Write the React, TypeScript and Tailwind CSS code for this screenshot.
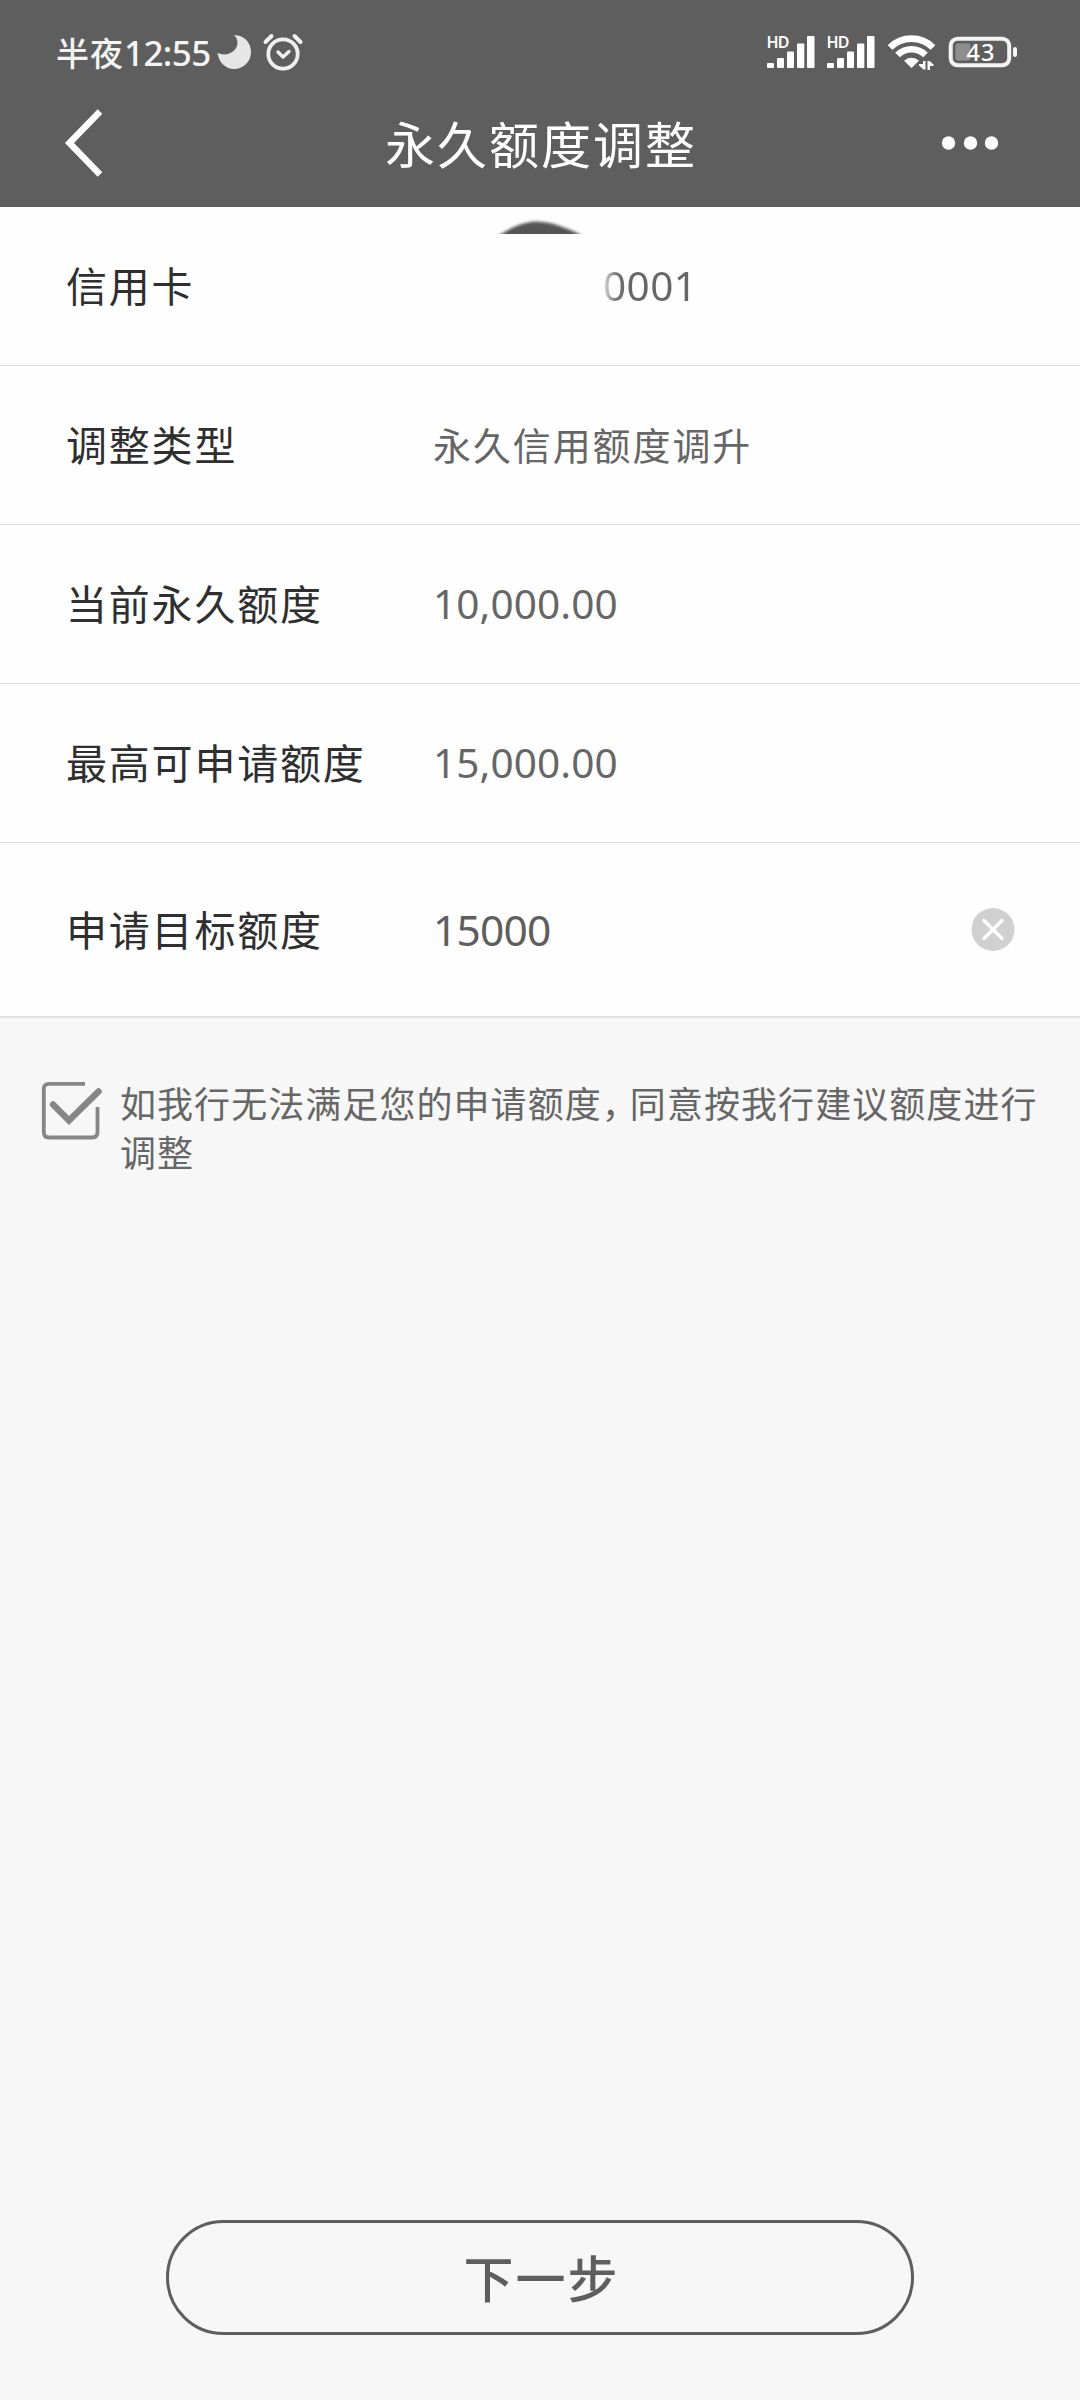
import React from "react";

const CJK = "font-['Noto_Sans_CJK_SC',sans-serif]";
const NUM = "font-['Noto_Sans','Noto_Sans_CJK_SC',sans-serif]";

function Signal() {
  return (
    <svg width="50" height="36" viewBox="0 0 50 36" fill="#fff" className="overflow-visible">
      <text x="0.5" y="14" fontFamily="Noto Sans" fontSize="16" fontWeight="600" textLength="23">HD</text>
      <rect x="1" y="29" width="7" height="5" rx="1" />
      <rect x="11" y="24" width="7" height="10" rx="1" />
      <rect x="21" y="17.5" width="7" height="16.5" rx="1" />
      <rect x="31" y="9.5" width="7.3" height="24.5" rx="1" />
      <rect x="41" y="2" width="7.5" height="32" rx="1" />
    </svg>
  );
}

function Wifi() {
  return (
    <svg width="50" height="36" viewBox="0 0 50 36">
      <g fill="none" stroke="#fff" strokeWidth="6.6">
        <path d="M3 13.5 A30.5 30.5 0 0 1 46 13.5" />
        <path d="M10.5 21 A20 20 0 0 1 38.5 21" />
      </g>
      <path d="M17 26.8 A11 11 0 0 1 32 26.8 L24.5 34 Z" fill="#fff" />
      <g fill="#fff">
        <path d="M36 27 H38.500 V35.500 H36.500 L32 31.500 V30 H36 Z" />
        <path d="M43 36 H40.500 V27 H42.500 L46.500 30.500 V32 H43 Z" />
      </g>
    </svg>
  );
}

function Battery() {
  return (
    <svg width="70" height="32" viewBox="0 0 70 32">
      <rect x="2.7" y="2.700" width="58.5" height="26.6" rx="7" fill="none" stroke="#f4f4f4" strokeWidth="4" />
      <rect x="7.5" y="7.500" width="15" height="17" rx="2" fill="#8e8e8e" />
      <text x="18.5" y="24.500" fontFamily="Noto Sans" fontSize="23.5" fontWeight="500" fill="#fff" textLength="28">43</text>
      <rect x="65" y="11" width="4" height="10" rx="2" fill="#f4f4f4" />
    </svg>
  );
}

function Row({ label, children }: { label: string; children: React.ReactNode }) {
  return (
    <div className="relative flex h-[159px] items-center border-b-[1px] border-[#d9d9d9] pl-[66px]">
      <div className={`w-[367px] pb-[3px] text-[41px] leading-none tracking-[1.8px] text-[#2f2f2f] ${CJK}`}>{label}</div>
      {children}
    </div>
  );
}

const amount = `text-[40.5px] leading-none tracking-[0.1px] text-[#666] ${NUM}`;

export default function App() {
  return (
    <div className="flex h-[2400px] w-[1080px] flex-col overflow-hidden bg-[#f7f7f7]">
      <header className="h-[207px] shrink-0 bg-[#5e5e5e] text-white">
        <div className="flex h-[90px] items-center pt-[14px] pl-[56px]">
          <span className={`text-[33px] font-medium leading-none tracking-[1px] text-[#f4f4f4] ${CJK}`}>半夜</span>
          <span className={`text-[35px] font-medium leading-none tracking-[-0.6px] text-[#f4f4f4] ${NUM}`}>12:55</span>
          <svg className="ml-[5px]" width="38" height="36" viewBox="0 0 38 36">
            <path d="M18 1 C29 1 35 9.500 35 18 C35 28 27 35 18 35 C10 35 3 29 1.500 19 C11 23 21 18 21.500 9 C21.500 6 20.500 3 18 1 Z" fill="#e6e6e6" />
          </svg>
          <svg className="ml-[8px]" width="42" height="40" viewBox="0 0 42 40" fill="none" stroke="#f0f0f0" strokeLinecap="round">
            <circle cx="21" cy="22" r="14.700" strokeWidth="3.800" />
            <path d="M16 20 L21 25 L27 19.500" strokeWidth="3.400" strokeLinejoin="round" />
            <path d="M3.500 10 L9.500 4 M32.500 4 L38.500 10" strokeWidth="4" />
          </svg>
          <div className="mr-[62px] ml-auto flex items-center">
            <Signal />
            <span className="w-[10px]" />
            <Signal />
            <span className="w-[11px]" />
            <Wifi />
            <span className="w-[11px]" />
            <Battery />
          </div>
        </div>
        <div className="flex h-[106px] items-center">
          <svg className="ml-[62px]" width="42" height="72" viewBox="0 0 42 72" fill="none" stroke="#fff" strokeWidth="6.5">
            <path d="M38 4.500 L7.500 36 L38 67.500" />
          </svg>
          <h1 className={`ml-[281px] pb-[2px] text-[50px] leading-none font-normal tracking-[2px] whitespace-nowrap ${CJK}`}>永久额度调整</h1>
          <svg className="mr-[80px] ml-auto" width="60" height="20" viewBox="0 0 60 20" fill="#fff">
            <circle cx="8.500" cy="10" r="6.700" />
            <circle cx="30.500" cy="10" r="6.700" />
            <circle cx="51.500" cy="10" r="6.700" />
          </svg>
        </div>
      </header>

      <main className="flex-1">
        <section className="bg-[#fefefe]">
          <Row label="信用卡">
            <svg className="absolute top-[8px] left-[490px]" width="100" height="19" viewBox="0 0 100 19">
              <defs>
                <filter id="soft" x="-20%" y="-50%" width="140%" height="200%">
                  <feGaussianBlur stdDeviation="1.800" />
                </filter>
              </defs>
              <path d="M-10 31 L10 19.500 C23 12 34 6.500 47 6.500 C62 7 77 13 90 19.500 L112 31 Z" fill="#555" filter="url(#soft)" />
            </svg>
            <span className={`ml-[170px] bg-gradient-to-r from-[#ddd] from-0% via-[#777] via-[14%] to-[#666] to-[25%] bg-clip-text text-[40.5px] leading-none tracking-[0.4px] text-transparent ${NUM}`}>0001</span>
          </Row>
          <Row label="调整类型">
            <span className={`pb-[2px] text-[38px] leading-none tracking-[1.900px] text-[#666] ${CJK}`}>永久信用额度调升</span>
          </Row>
          <Row label="当前永久额度">
            <span className={amount}>10,000.00</span>
          </Row>
          <Row label="最高可申请额度">
            <span className={amount}>15,000.00</span>
          </Row>
          <div className="flex h-[175px] items-center border-b-2 border-[#e0e0e0] pl-[66px]">
            <div className={`w-[367px] pb-[2px] text-[41px] leading-none tracking-[1.8px] text-[#2f2f2f] ${CJK}`}>申请目标额度</div>
            <span className={`pt-[1px] text-[42.5px] leading-none tracking-[-0.8px] text-[#5e5e5e] ${NUM}`}>15000</span>
            <svg className="mr-[65px] ml-auto" width="44" height="44" viewBox="0 0 44 44">
              <circle cx="22" cy="21.500" r="21.500" fill="#d0d0d0" />
              <path d="M13 12.500 L31 30.500 M31 12.500 L13 30.500" stroke="#fff" strokeWidth="3.400" strokeLinecap="round" />
            </svg>
          </div>
        </section>

        <label className="flex pt-[60px] pl-[40px]">
          <svg className="mt-[2px] shrink-0" width="64" height="62" viewBox="0 0 64 62" fill="none" stroke="#868686">
            <path d="M45 3.800 H9 Q3.800 3.800 3.800 9 V52 Q3.800 57.500 9 57.500 H52 Q57.500 57.500 57.500 52 V27" strokeWidth="3.800" />
            <path d="M13 24.500 L29 40.500 L58.500 11.500" strokeWidth="6.500" strokeLinecap="round" />
          </svg>
          <p className={`ml-[16px] text-[36px] leading-[49.300px] tracking-[1.060px] whitespace-nowrap text-[#666] ${CJK}`}>
            如我行无法满足您的申请额度<span className="mr-[9px] [font-feature-settings:'halt']">，</span>同意按我行建议额度进行
            <br />
            调整
          </p>
        </label>
      </main>

      <footer className="flex h-[180px] shrink-0 justify-center">
        <button className={`h-[115px] w-[748px] rounded-full border-[3px] border-[#5e5e5e] pb-[4px] pl-[3px] text-[50px] leading-none font-medium tracking-[2px] text-[#5e5e5e] ${CJK}`}>下一步</button>
      </footer>
    </div>
  );
}
